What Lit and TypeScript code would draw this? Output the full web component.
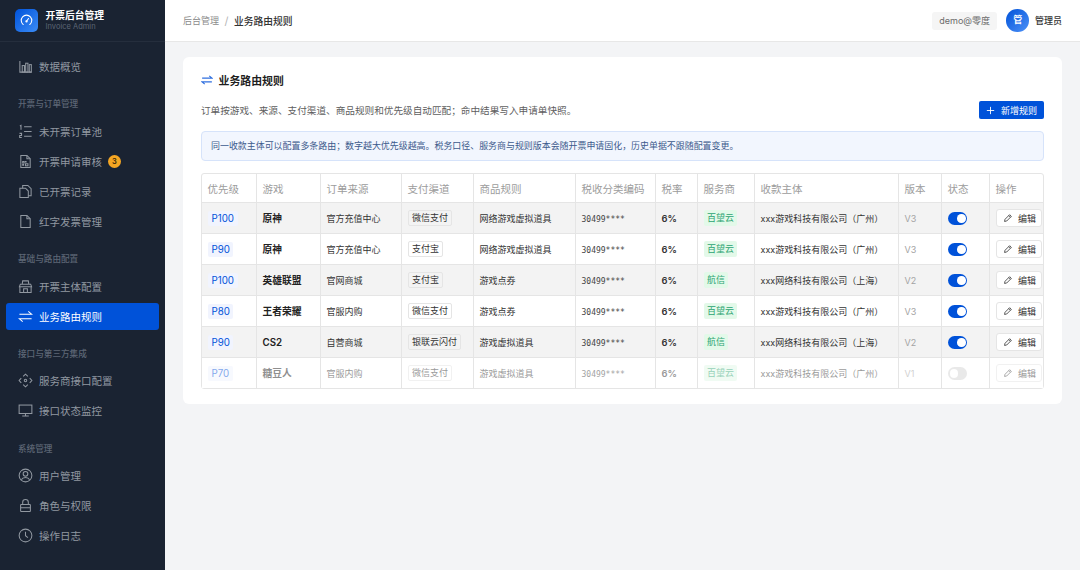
import { LitElement, html, css, svg } from "lit";
import { customElement } from "lit/decorators.js";

const ICONS: Record<string, any> = {
  chart: svg`<path d="M2 2v12h12.5"/><rect x="4.5" y="7" width="2.4" height="7"/><rect x="8.2" y="4.5" width="2.4" height="9.5"/><rect x="12" y="6" width="2.2" height="8"/>`,
  list: svg`<path d="M6.5 3h8M6.5 8h8M6.5 13h8M2 2.2l1.2-.7V6M1.6 10h2.2v2.2H1.8v2.3h2.2"/>`,
  fileGrid: svg`<path d="M9.5 1.5H3v13h10V5z"/><path d="M9.5 1.5V5H13"/><rect x="5" y="8" width="1.6" height="1.6"/><rect x="8" y="8" width="0.6" height="0.6"/><rect x="5" y="11" width="1" height="1"/><rect x="8" y="10.4" width="2.6" height="2.2"/>`,
  copy: svg`<path d="M5 4.5V1.5h5.5L14 5v7.5h-3"/><path d="M2 4.5h6l3 3v7H2z"/>`,
  file: svg`<path d="M9.5 1.5H3v13h10V5z"/><path d="M9.5 1.5V5H13"/>`,
  store: svg`<path d="M4.5 5.5L5 2h6l.5 3.5M1.5 8.2l1-2.7h11l1 2.7zM2 8.2v6.3h12V8.2M6 14.5v-4h4v4"/>`,
  swap: svg`<path d="M1.5 5.5h13L11 2.5M14.5 10.5h-13L5 13.5"/>`,
  nodes: svg`<path d="M5.5 3.5L8 1.2l2.5 2.3M5.5 12.5L8 14.8l2.5-2.3M3.5 5.5L1.2 8l2.3 2.5M12.5 5.5L14.8 8l-2.3 2.5"/><circle cx="8" cy="8" r="1.3"/>`,
  monitor: svg`<rect x="1.2" y="2.2" width="13.6" height="9"/><path d="M8 11.2v2.6M4.5 13.9h7"/>`,
  user: svg`<circle cx="8" cy="8" r="6.8"/><circle cx="8" cy="6.2" r="2.5"/><path d="M3.6 12.6c.8-1.7 2.5-2.5 4.4-2.5s3.6.8 4.4 2.5"/>`,
  lock: svg`<rect x="2.8" y="7" width="10.4" height="7.5" rx=".6"/><path d="M5 7V4.6a3 3 0 0 1 6 0V7M2.8 10.4h10.4"/>`,
  clock: svg`<circle cx="8" cy="8" r="6.8"/><path d="M8 4v4.3l2.6 2"/>`,
};

const icon = (name: string) =>
  html`<svg class="icon" viewBox="0 0 16 16" fill="none" stroke="currentColor" stroke-width="1.1">${ICONS[name]}</svg>`;

const NAV = [
  { items: [{ icon: "chart", label: "数据概览" }] },
  {
    title: "开票与订单管理",
    items: [
      { icon: "list", label: "未开票订单池" },
      { icon: "fileGrid", label: "开票申请审核", badge: "3" },
      { icon: "copy", label: "已开票记录" },
      { icon: "file", label: "红字发票管理" },
    ],
  },
  {
    title: "基础与路由配置",
    items: [
      { icon: "store", label: "开票主体配置" },
      { icon: "swap", label: "业务路由规则", active: true },
    ],
  },
  {
    title: "接口与第三方集成",
    items: [
      { icon: "nodes", label: "服务商接口配置" },
      { icon: "monitor", label: "接口状态监控" },
    ],
  },
  {
    title: "系统管理",
    items: [
      { icon: "user", label: "用户管理" },
      { icon: "lock", label: "角色与权限" },
      { icon: "clock", label: "操作日志" },
    ],
  },
];

const COLUMNS = ["优先级", "游戏", "订单来源", "支付渠道", "商品规则", "税收分类编码", "税率", "服务商", "收款主体", "版本", "状态", "操作"];

const ROWS = [
  { p: "P100", game: "原神", source: "官方充值中心", pay: "微信支付", rule: "网络游戏虚拟道具", vendor: "百望云", payee: "xxx游戏科技有限公司（广州）", ver: "V3", on: true },
  { p: "P90", game: "原神", source: "官方充值中心", pay: "支付宝", rule: "网络游戏虚拟道具", vendor: "百望云", payee: "xxx游戏科技有限公司（广州）", ver: "V3", on: true },
  { p: "P100", game: "英雄联盟", source: "官网商城", pay: "支付宝", rule: "游戏点券", vendor: "航信", payee: "xxx网络科技有限公司（上海）", ver: "V2", on: true },
  { p: "P80", game: "王者荣耀", source: "官服内购", pay: "微信支付", rule: "游戏点券", vendor: "百望云", payee: "xxx游戏科技有限公司（广州）", ver: "V3", on: true },
  { p: "P90", game: "CS2", source: "自营商城", pay: "银联云闪付", rule: "游戏虚拟道具", vendor: "航信", payee: "xxx网络科技有限公司（上海）", ver: "V2", on: true },
  { p: "P70", game: "糖豆人", source: "官服内购", pay: "微信支付", rule: "游戏虚拟道具", vendor: "百望云", payee: "xxx游戏科技有限公司（广州）", ver: "V1", on: false },
];

@customElement("app-root")
export class AppRoot extends LitElement {
  static styles = css`
    :host {
      display: flex;
      height: 570px;
      overflow: hidden;
      font-family: Inter, "Noto Sans CJK SC", sans-serif;
      background: #f3f4f6;
      color: #222;
    }

    /* sidebar */
    .sidebar {
      width: 165px;
      flex: none;
      background: #1a2332;
      color: #9198a1;
    }
    .brand {
      height: 41px;
      display: flex;
      align-items: center;
      gap: 8px;
      padding-left: 15px;
      border-bottom: 1px solid #252e3d;
    }
    .logo {
      width: 22.5px;
      height: 22.5px;
      border-radius: 5px;
      background: linear-gradient(135deg, #0052d9, #3b8cf7);
      display: flex;
      align-items: center;
      justify-content: center;
    }
    .logo svg {
      width: 13px;
      height: 13px;
    }
    .brand-text {
      padding-top: 1px;
    }
    .brand-name {
      font-size: 9.75px;
      line-height: 12px;
      font-weight: 600;
      color: #fff;
    }
    .brand-sub {
      font-size: 7.5px;
      line-height: 10px;
      color: #5d6675;
    }
    nav {
      padding: 11px 6px 0;
    }
    .nav-title {
      height: 12px;
      line-height: 12px;
      padding: 15.25px 12px 7.5px;
      font-size: 8.6px;
      font-weight: 500;
      color: #5d6675;
    }
    .nav-item {
      height: 27px;
      margin-bottom: 3px;
      display: flex;
      align-items: center;
      gap: 6px;
      padding-left: 12px;
      border-radius: 3px;
      font-size: 10.5px;
    }
    .nav-item.active {
      background: #0052d9;
      color: #fff;
    }
    .icon {
      width: 15px;
      height: 15px;
      flex: none;
    }
    .badge {
      width: 13px;
      height: 13px;
      border-radius: 50%;
      background: #f5a623;
      color: #3a2a08;
      font-size: 7.5px;
      font-weight: 600;
      line-height: 13px;
      text-align: center;
    }

    /* header */
    .main {
      flex: 1;
      min-width: 0;
    }
    header {
      height: 41px;
      background: #fff;
      border-bottom: 1px solid #e7e7e7;
      display: flex;
      align-items: center;
      padding: 0 18px;
    }
    .crumb-root {
      font-size: 9px;
      color: #8b8b8b;
    }
    .crumb-sep {
      margin: 0 5.5px;
      font-size: 11px;
      color: #b5b5b5;
    }
    .crumb-now {
      font-size: 9.75px;
      font-weight: 500;
      color: #333;
    }
    .spacer {
      flex: 1;
    }
    .tenant {
      height: 18px;
      line-height: 18px;
      padding: 0 7.5px;
      margin-right: 9px;
      border-radius: 3px;
      background: #f5f5f5;
      font-size: 9px;
      color: #6b6b6b;
    }
    .avatar {
      width: 22.5px;
      height: 22.5px;
      margin-right: 6px;
      border-radius: 50%;
      background: linear-gradient(135deg, #0052d9, #4d91f7);
      color: #fff;
      font-size: 9px;
      font-weight: 600;
      line-height: 22.5px;
      text-align: center;
    }
    .user-name {
      font-size: 9px;
      font-weight: 500;
      color: #333;
    }

    /* card */
    .content {
      padding: 15px 18px;
    }
    .card {
      background: #fff;
      border-radius: 6px;
      padding: 17px 18px 15px;
    }
    .title-row {
      display: flex;
      align-items: center;
      gap: 5.5px;
      height: 12px;
    }
    .title-row .icon {
      width: 12px;
      height: 12px;
      color: #2f6fdf;
      stroke-width: 1.5;
    }
    h2 {
      margin: 0;
      font-size: 10.9px;
      font-weight: 600;
      color: #1f1f1f;
    }
    .desc-row {
      display: flex;
      align-items: center;
      justify-content: space-between;
      height: 18px;
      margin-top: 15px;
    }
    .desc {
      font-size: 9.65px;
      color: #5e5e5e;
    }
    .add {
      width: 65px;
      height: 18px;
      box-sizing: border-box;
      display: flex;
      align-items: center;
      gap: 6px;
      padding-left: 7px;
      border-radius: 2px;
      background: #0052d9;
      color: #fff;
      font-size: 9px;
    }
    .add svg {
      width: 9px;
      height: 9px;
    }
    .alert {
      height: 30px;
      box-sizing: border-box;
      margin-top: 12px;
      padding-left: 9px;
      border: 1px solid #d6e3fa;
      border-radius: 4px;
      background: #f2f6fe;
      color: #3c5a8c;
      font-size: 8.95px;
      line-height: 28px;
    }

    /* table */
    table {
      width: 843px;
      margin-top: 12px;
      table-layout: fixed;
      border-collapse: separate;
      border-spacing: 0;
      border: 1px solid #e5e5e5;
      border-radius: 3px;
      font-size: 9px;
      color: #333;
    }
    th,
    td {
      padding: 0 0 0 5.5px;
      box-sizing: border-box;
      border-right: 1px solid #e5e5e5;
      text-align: left;
      white-space: nowrap;
      overflow: hidden;
    }
    th:last-child,
    td:last-child {
      border-right: 0;
    }
    td {
      height: 31px;
      border-top: 1px solid #e5e5e5;
    }
    th {
      height: 28px;
      font-size: 10.5px;
      font-weight: 400;
      color: #9c9c9c;
    }
    tbody tr:nth-child(odd) {
      background: #f3f3f3;
    }
    tbody tr.off {
      background: #fff;
    }
    tr.off td > * {
      opacity: 0.5;
    }
    .prio {
      display: inline-block;
      padding: 0 3.5px;
      height: 15px;
      line-height: 15px;
      border-radius: 2px;
      background: #f1f4fe;
      color: #0052d9;
      font-size: 9.75px;
      margin-left: 0.5px;
    }
    .game {
      font-size: 9.75px;
      font-weight: 600;
      color: #222;
    }
    .pay {
      display: inline-block;
      height: 15.5px;
      line-height: 13.5px;
      box-sizing: border-box;
      margin-left: 0.5px;
      padding: 0 3px;
      border: 1px solid #e5e5e5;
      border-radius: 2px;
    }
    .code {
      font-family: "DejaVu Sans Mono", monospace;
      font-size: 8px;
      color: #444;
    }
    .rate {
      font-weight: 600;
      font-size: 9.4px;
    }
    .vendor {
      display: inline-block;
      height: 15.5px;
      line-height: 15.5px;
      padding: 0 3.4px;
      border-radius: 2px;
      background: #e3f9e9;
      color: #2ba471;
    }
    .ver {
      color: #a3a3a3;
    }
    .switch {
      display: block;
      position: relative;
      width: 19px;
      height: 12.5px;
      margin: 1px 0 0 0.5px;
      border-radius: 7px;
      background: #0052d9;
    }
    .switch::after {
      content: "";
      position: absolute;
      top: 2px;
      right: 1.5px;
      width: 8.5px;
      height: 8.5px;
      border-radius: 50%;
      background: #fff;
    }
    .switch.is-off {
      background: #d4d4d4;
    }
    .switch.is-off::after {
      right: auto;
      left: 1.5px;
    }
    .edit {
      width: 46px;
      height: 17.5px;
      box-sizing: border-box;
      margin-left: 0.5px;
      display: flex;
      align-items: center;
      gap: 5px;
      padding-left: 6px;
      border: 1px solid #e5e5e5;
      border-radius: 3px;
      background: #fff;
      font-size: 9px;
      color: #333;
    }
    .edit svg {
      width: 10px;
      height: 10px;
      flex: none;
    }
    .c1 { width: 55px; }
    .c2 { width: 64px; }
    .c3 { width: 81px; }
    .c4 { width: 72px; }
    .c5 { width: 102px; }
    .c6 { width: 80px; }
    .c7 { width: 42px; }
    .c8 { width: 57px; }
    .c9 { width: 144px; }
    .c10 { width: 43px; }
    .c11 { width: 48px; }
  `;

  private renderRow(r: (typeof ROWS)[number]) {
    return html`
      <tr class=${r.on ? "" : "off"}>
        <td><span class="prio">${r.p}</span></td>
        <td><span class="game">${r.game}</span></td>
        <td><span>${r.source}</span></td>
        <td><span class="pay">${r.pay}</span></td>
        <td><span>${r.rule}</span></td>
        <td><span class="code">30499****</span></td>
        <td><span class="rate">6%</span></td>
        <td><span class="vendor">${r.vendor}</span></td>
        <td><span>${r.payee}</span></td>
        <td><span class="ver">${r.ver}</span></td>
        <td><span class="switch ${r.on ? "" : "is-off"}"></span></td>
        <td>
          <span class="edit">
            <svg viewBox="0 0 16 16" fill="none" stroke="currentColor" stroke-width="1.3"><path d="M2.5 13.5l.7-3.4 7.4-7.4 2.7 2.7-7.4 7.4zM9.2 4.1l2.7 2.7"/></svg>
            编辑
          </span>
        </td>
      </tr>
    `;
  }

  render() {
    return html`
      <aside class="sidebar">
        <div class="brand">
          <div class="logo">
            <svg viewBox="0 0 16 16" fill="none" stroke="#fff" stroke-width="1.3" stroke-linecap="round">
              <path d="M4 13a6.5 6.5 0 1 1 8 0"/>
              <path d="M8 9l2.5-3.5"/>
              <circle cx="8" cy="9" r=".8"/>
            </svg>
          </div>
          <div class="brand-text">
            <div class="brand-name">开票后台管理</div>
            <div class="brand-sub">Invoice Admin</div>
          </div>
        </div>
        <nav>
          ${NAV.map(
            (group) => html`
              ${group.title ? html`<div class="nav-title">${group.title}</div>` : ""}
              ${group.items.map(
                (item: any) => html`
                  <div class="nav-item ${item.active ? "active" : ""}">
                    ${icon(item.icon)}
                    <span>${item.label}</span>
                    ${item.badge ? html`<span class="badge">${item.badge}</span>` : ""}
                  </div>
                `
              )}
            `
          )}
        </nav>
      </aside>
      <div class="main">
        <header>
          <span class="crumb-root">后台管理</span>
          <span class="crumb-sep">/</span>
          <span class="crumb-now">业务路由规则</span>
          <span class="spacer"></span>
          <span class="tenant">demo@零度</span>
          <span class="avatar">管</span>
          <span class="user-name">管理员</span>
        </header>
        <div class="content">
          <section class="card">
            <div class="title-row">
              ${icon("swap")}
              <h2>业务路由规则</h2>
            </div>
            <div class="desc-row">
              <span class="desc">订单按游戏、来源、支付渠道、商品规则和优先级自动匹配；命中结果写入申请单快照。</span>
              <span class="add">
                <svg viewBox="0 0 16 16" fill="none" stroke="#fff" stroke-width="1.6"><path d="M8 1.5v13M1.5 8h13"/></svg>
                新增规则
              </span>
            </div>
            <div class="alert">同一收款主体可以配置多条路由；数字越大优先级越高。税务口径、服务商与规则版本会随开票申请固化，历史单据不跟随配置变更。</div>
            <table>
              <colgroup>
                ${COLUMNS.map((_, i) => html`<col class="c${i + 1}" />`)}
              </colgroup>
              <thead>
                <tr>${COLUMNS.map((c) => html`<th>${c}</th>`)}</tr>
              </thead>
              <tbody>
                ${ROWS.map((r) => this.renderRow(r))}
              </tbody>
            </table>
          </section>
        </div>
      </div>
    `;
  }
}
